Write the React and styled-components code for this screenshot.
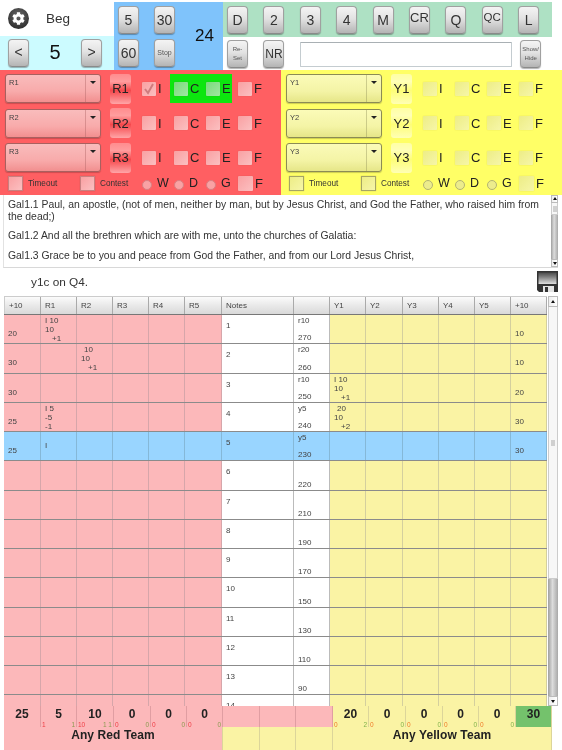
import React from "react";
import styled, { createGlobalStyle, css } from "styled-components";
import { FaCog } from "react-icons/fa";

const Global = createGlobalStyle`
  html, body { margin: 0; padding: 0; background: #fff; }
  body { font-family: "Liberation Sans", Arial, sans-serif; color: #222; }
`;

const Page = styled.div`
  width: 562px; height: 750px; overflow: hidden; background: #fff;
  display: flex; flex-direction: column; filter: blur(0.35px);
`;

/* ---------- top bar ---------- */
const TopBar = styled.div`display: flex; height: 70px; padding-top: 2px; box-sizing: border-box;`;
const LeftCol = styled.div`width: 114px; display: flex; flex-direction: column;`;
const LevelRow = styled.div`height: 34px; display: flex; align-items: center; padding: 0 0 2px 8px; box-sizing: border-box;`;
const Gear = styled.div`
  width: 21px; height: 21px; border-radius: 50%; color: #fff;
  background: radial-gradient(circle at 50% 35%, #666, #2a2a2a 85%);
  display: flex; align-items: center; justify-content: center;
`;
const Level = styled.span`font-size: 13.5px; margin-left: 17px; color: #333;`;
const QuarterRow = styled.div`
  flex: 1; background: #ccfbff; display: flex; align-items: center; padding-left: 8px; padding-bottom: 1px; box-sizing: border-box;
`;
const Quarter = styled.span`width: 52px; text-align: center; font-size: 20px; color: #111;`;

const Key = styled.div`
  flex: none; width: 21px; height: 28px; box-sizing: border-box; border-radius: 4px;
  border: 1px solid #a0a0a0; border-bottom-color: #8a8a8a; box-shadow: 0 1px 1px rgba(0,0,0,.3);
  background: linear-gradient(#f4f4f4, #e2e2e2 45%, #b4b4b4);
  display: flex; align-items: center; justify-content: center; text-align: center;
  color: ${p => (p.$small ? "#555" : "#333")};
  font-size: ${p => p.$size || 14}px; line-height: 1.5;
  ${p => p.$raised && css`padding-bottom: 5px;`}
`;
const ClockPanel = styled.div`
  width: 109px; background: #7fc3fb; display: grid; box-sizing: border-box;
  grid-template-columns: 21px 21px 1fr; column-gap: 15px; row-gap: 5px;
  padding: 4px 0 0 4px; grid-template-rows: 28px 28px;
`;
const Clock = styled.div`
  grid-column: 3; grid-row: 1 / 3; font-size: 17px; color: #111;
  display: flex; align-items: center; padding: 0 0 1px 5px;
`;
const RightCol = styled.div`width: 339px; display: flex; flex-direction: column;`;
const CallRow = styled.div`
  width: 329px; height: 35px; background: #aee1c4; display: flex; gap: 15.4px;
  padding: 4px 0 0 4px; box-sizing: border-box;
`;
const ActionRow = styled.div`display: flex; align-items: center; gap: 15.4px; padding: 1px 0 0 4px; height: 33px; box-sizing: border-box;`;
const NoteInput = styled.div`
  width: 212px; height: 25px; box-sizing: border-box; background: #fff;
  border: 1px solid #c4ccd0; border-top-color: #a9b0b4; border-radius: 1px; margin-right: -7px;
`;

/* ---------- team panels ---------- */
const Teams = styled.div`display: flex; height: 125px;`;
const palette = {
  red: {
    panel: "#ff5f62", sel: "linear-gradient(#f9bcbc, #f8abab 60%, #f28f8f)", selB: "#a9605f",
    btn: "linear-gradient(#ff8c8e, #ff9d9e 25%, #f5484c 55%, #ffa5a7)", text: "#222",
    box: "linear-gradient(135deg, #f9a0a2, #fbc0c1)", radio: "#f9a2a4", radioB: "#d98082",
  },
  yellow: {
    panel: "#ffff66", sel: "linear-gradient(#fbfbb8, #f4f4a6 60%, #e6e688)", selB: "#8b8b55",
    btn: "linear-gradient(#ffffa5, #ffffb8 25%, #fdfd78 55%, #ffffb5)", text: "#222",
    box: "linear-gradient(135deg, #eded86, #f6f6a8)", radio: "#ecec8c", radioB: "#b4b472",
  },
};
const Panel = styled.div`
  width: 281px; box-sizing: border-box; background: ${p => palette[p.$team].panel};
  padding: 4px 0 0 5px; display: flex; flex-direction: column; gap: 5px;
`;
const PlayerRow = styled.div`display: flex; align-items: center; height: 29.5px;`;
const Select = styled.div`
  width: 96px; height: 29px; box-sizing: border-box; flex: none; margin-right: 9px;
  background: ${p => palette[p.$team].sel}; border: 1px solid ${p => palette[p.$team].selB};
  border-radius: 3px; box-shadow: 0 1px 1px rgba(0,0,0,.2);
  display: flex;
`;
const SelectText = styled.span`flex: 1; font-size: 7.5px; padding: 3px 0 0 3px; color: #444;`;
const SelectCaret = styled.span`
  width: 15px; border-left: 1px solid ${p => palette[p.$team].selB}66; display: flex; justify-content: center; padding-top: 6px; box-sizing: border-box;
  &::after { content: ""; width: 0; height: 0; border: 3px solid transparent; border-top: 3.5px solid #222; }
`;
const PlayerBtn = styled.div`
  width: 21px; height: 30px; flex: none; margin-right: 7px; border-radius: 3px;
  background: ${p => palette[p.$team].btn};
  display: flex; align-items: center; justify-content: center;
  font-size: 13px; color: #222;
`;
const Hit = styled.div`display: flex; width: 62px; height: 29px; background: #0de60f; margin-right: 2px;`;
const CheckCell = styled.div`flex: none; width: 32px; height: 29px; display: flex; align-items: center; padding-left: 4px; box-sizing: border-box;`;
const Box = styled.span`
  flex: none; width: ${p => p.$s || 14}px; height: ${p => p.$s || 14}px; box-sizing: border-box; border-radius: 1px;
  background: ${p => (p.$hit ? "linear-gradient(135deg, #7bd97d, #9fe8a0)" : palette[p.$team].box)};
  box-shadow: 0 0 1px rgba(90,60,40,.35);
  display: flex; align-items: center; justify-content: center;
`;
const Letter = styled.span`font-size: 13px; margin-left: 2px; color: #222;`;
const OptionRow = styled.div`display: flex; align-items: center; height: 16px; margin-top: -2px; padding-left: 3px;`;
const Option = styled.div`flex: none; width: ${p => p.$w}px; display: flex; align-items: center;`;
const OptBox = styled(Box)`
  border: 1px solid ${p => (p.$team === "red" ? "#c98080" : "#a5a565")}; border-radius: 0; margin-right: 5px;
`;
const OptLabel = styled.span`font-size: 8.2px; color: #333;`;
const RadioCell = styled.div`flex: none; width: 32px; display: flex; align-items: center; box-sizing: border-box;`;
const Radio = styled.span`
  width: 10px; height: 10px; border-radius: 50%; box-sizing: border-box; margin: 3px 5px 0 0;
  background: ${p => palette[p.$team].radio};
  border: 1px solid ${p => palette[p.$team].radioB};
`;
const RadioLabel = styled.span`font-size: 12.5px; color: #222; margin-top: -1px;`;
const FinalCell = styled.div`display: flex; align-items: center;`;

function TeamPanel({ team, prefix, checked, hit }) {
  return (
    <Panel $team={team}>
      {[1, 2, 3].map(n => (
        <PlayerRow key={n}>
          <Select $team={team}>
            <SelectText>{prefix}{n}</SelectText>
            <SelectCaret $team={team} />
          </Select>
          <PlayerBtn $team={team}>{prefix}{n}</PlayerBtn>
          <CheckCell>
            <Box $team={team}>
              {checked && n === 1 && (
                <svg width="12" height="12" viewBox="0 0 12 12"><path d="M2 6l3 4 5-9" fill="none" stroke="#cf7c7e" strokeWidth="2" /></svg>
              )}
            </Box>
            <Letter>I</Letter>
          </CheckCell>
          {hit && n === 1 ? (
            <Hit>
              <CheckCell><Box $team={team} $hit /><Letter>C</Letter></CheckCell>
              <CheckCell><Box $team={team} $hit /><Letter>E</Letter></CheckCell>
            </Hit>
          ) : (
            <>
              <CheckCell><Box $team={team} /><Letter>C</Letter></CheckCell>
              <CheckCell><Box $team={team} /><Letter>E</Letter></CheckCell>
            </>
          )}
          <CheckCell><Box $team={team} /><Letter>F</Letter></CheckCell>
        </PlayerRow>
      ))}
      <OptionRow>
        <Option $w={72}><OptBox as="span" $team={team} $s={15} /><OptLabel>Timeout</OptLabel></Option>
        <Option $w={62}><OptBox as="span" $team={team} $s={15} /><OptLabel>Contest</OptLabel></Option>
        {["W", "D", "G"].map(l => (
          <RadioCell key={l}><Radio $team={team} /><RadioLabel>{l}</RadioLabel></RadioCell>
        ))}
        <FinalCell><Box $team={team} $s={15} /><Letter>F</Letter></FinalCell>
      </OptionRow>
    </Panel>
  );
}

/* ---------- scripture ---------- */
const Reading = styled.div`
  display: flex; height: 73px; margin-left: 3px; width: 555px; box-sizing: border-box;
  border-left: 1px solid #e2e2e2; border-bottom: 1px solid #d8d8d8;
`;
const ReadingText = styled.div`
  flex: 1; padding: 4px 12px 0 4px; font-size: 10.4px; line-height: 11.8px; color: #333;
  overflow: hidden;
`;
const Verse = styled.p`margin: 0 0 7.8px;`;
const FullLine = styled.span`display: block; text-align: justify; text-align-last: justify;`;
const Bar = styled.div`flex: none; width: ${p => p.$w}px; display: flex; flex-direction: column; background: #fff;`;
const Arrow = styled.div`
  flex: none; height: ${p => p.$h}px; background: linear-gradient(90deg, #eee, #fff); border: 1px solid #bbb; box-sizing: border-box;
  display: flex; align-items: center; justify-content: center;
  &::after {
    content: ""; border: 2.5px solid transparent;
    ${p => (p.$up ? "border-bottom: 3px solid #111; margin-top: -3px;" : "border-top: 3px solid #111; margin-top: 3px;")}
  }
`;
const Thumb = styled.div`
  flex: none; height: ${p => p.$h}px; background: #f7f7f7; border: 1px solid #ccc; border-top: 0; box-sizing: border-box;
  display: flex; align-items: center; justify-content: center;
  &::after { content: ""; width: 4px; height: 6px; background: #d0d0d0; }
`;
const Track = styled.div`flex: 1; background: linear-gradient(90deg, #9f9f9f, #dcdcdc 45%, #a8a8a8);`;

/* ---------- note line ---------- */
const LogLine = styled.div`height: 28px; display: flex; align-items: center; padding: 0 4px 2px 31px; box-sizing: border-box;`;
const LogText = styled.span`flex: 1; font-size: 11.8px; color: #333; padding-top: 2px;`;

/* ---------- sheet ---------- */
const Sheet = styled.div`display: flex; height: 410px; padding-left: 4px; gap: 1px; width: 558px; box-sizing: border-box;`;
const Columns = "37px 36px 36px 36px 36px 37px 72px 36px 36px 37px 36px 36px 36px 36px";
const SheetBody = styled.div`width: 543px; display: flex; flex-direction: column; overflow: hidden;`;
const HeaderRow = styled.div`
  flex: none; display: grid; grid-template-columns: ${Columns}; height: 19px; box-sizing: border-box;
  border-top: 1px solid #ccc; border-bottom: 1px solid #777;
`;
const Head = styled.div`
  background: linear-gradient(#fbfbfb, #e9e9e9 50%, #d9d9d9);
  border-right: 1px solid #aaa; font-size: 8px; color: #444; padding-left: 4px;
  display: flex; align-items: center;
  &:first-child { border-left: 1px solid #ccc; }
`;
const Row = styled.div`
  flex: none; display: grid; grid-template-columns: ${Columns}; height: 29.25px; box-sizing: border-box;
  border-bottom: 1.5px solid #8b8b8b;
`;
const tones = { red: "#fcb8ba", yellow: "#faf3a4", white: "#fff", blue: "#99d5ff" };
const Cell = styled.div`
  background: ${p => (p.$active ? tones.blue : tones[p.$tone])};
  border-right: 1px solid ${p => (p.$tone === "white" && !p.$active ? "#bbb" : p.$tone === "yellow" && !p.$active ? "#d4cf9e" : p.$tone === "red" && !p.$active ? "#d6a6aa" : "#85b8d8")};
  font-size: 8px; line-height: 9px; color: #444; padding-left: 4px; box-sizing: border-box; overflow: hidden;
`;
const Bonus = styled(Cell)`padding-top: 14px;`;
const Marks = styled(Cell)`padding-top: 1px;`;
const Mark = styled.div`padding-left: ${p => p.$indent || 0}px;`;
const Lone = styled(Cell)`padding-top: 9px;`;
const NoteCell = styled(Cell)`padding-top: 6px;`;
const Running = styled(Cell)`
  display: flex; flex-direction: column; justify-content: space-between; padding-top: 1px; padding-bottom: 1px; padding-left: 4px;
`;

const rowsData = [
  { l: 20, n: 1, c: "r10", t: 270, r: 10, r1: [["I 10", 0], ["10", 0], ["+1", 7]] },
  { l: 30, n: 2, c: "r20", t: 260, r: 10, r2: [["10", 3], ["10", 0], ["+1", 7]] },
  { l: 30, n: 3, c: "r10", t: 250, r: 20, y1: [["I 10", 0], ["10", 0], ["+1", 7]] },
  { l: 25, n: 4, c: "y5", t: 240, r: 30, r1: [["I 5", 0], ["-5", 0], ["-1", 0]], y1: [["20", 3], ["10", 0], ["+2", 7]] },
  { l: 25, n: 5, c: "y5", t: 230, r: 30, r1lone: "I", active: true },
  { n: 6, t: 220 }, { n: 7, t: 210 }, { n: 8, t: 190 }, { n: 9, t: 170 }, { n: 10, t: 150 },
  { n: 11, t: 130 }, { n: 12, t: 110 }, { n: 13, t: 90 }, { n: 14 },
];

const MarkCell = ({ tone, active, lines, lone }) => {
  if (lone) return <Lone $tone={tone} $active={active}>{lone}</Lone>;
  return (
    <Marks $tone={tone} $active={active}>
      {(lines || []).map(([txt, ind], i) => <Mark key={i} $indent={ind}>{txt}</Mark>)}
    </Marks>
  );
};

const SheetRow = ({ d }) => {
  const a = d.active;
  return (
    <Row>
      <Bonus $tone="red" $active={a}>{d.l}</Bonus>
      <MarkCell tone="red" active={a} lines={d.r1} lone={d.r1lone} />
      <MarkCell tone="red" active={a} lines={d.r2} />
      <MarkCell tone="red" active={a} />
      <MarkCell tone="red" active={a} />
      <MarkCell tone="red" active={a} />
      <NoteCell $tone="white" $active={a}>{d.n}</NoteCell>
      <Running $tone="white" $active={a}><span>{d.c || "\u00a0"}</span><span>{d.t}</span></Running>
      <MarkCell tone="yellow" active={a} lines={d.y1} />
      <MarkCell tone="yellow" active={a} />
      <MarkCell tone="yellow" active={a} />
      <MarkCell tone="yellow" active={a} />
      <MarkCell tone="yellow" active={a} />
      <Bonus $tone="yellow" $active={a}>{d.r}</Bonus>
    </Row>
  );
};

/* ---------- totals ---------- */
const TotalsRow = styled.div`
  margin-left: 4px; width: 548px; height: 21px; display: grid;
  grid-template-columns: 37px 36px 37px 37px 36px 36px 37px 36px 37px 36px 37px 37px 36px 37px 36px;
`;
const Total = styled.div`
  background: ${p => (p.$win ? "#74c26c" : tones[p.$tone])};
  border-right: 1px solid ${p => (p.$tone === "yellow" ? "#dcd59a" : "#e09ea2")};
  border-bottom: 1px solid ${p => (p.$tone === "yellow" ? "#dcd59a" : "#e09ea2")};
  display: flex; flex-direction: column; box-sizing: border-box; padding: 0 1px;
`;
const Big = styled.div`font-size: 12px; line-height: 14px; font-weight: bold; text-align: center; color: #222; height: 14px; padding-top: 1px;`;
const Small = styled.div`display: flex; justify-content: space-between; font-size: 6.5px; line-height: 7px;`;
const Minus = styled.span`color: ${p => (p.$tone === "red" ? "#ee3c44" : "#ee7a2a")};`;
const Plus = styled.span`color: ${p => (p.$tone === "red" ? "#8a9a50" : "#7fb24a")};`;
const AnyRow = styled.div`
  margin-left: 4px; width: 548px; height: 23px; display: grid;
  grid-template-columns: 219px 37px 36px 37px 219px;
`;
const Any = styled.div`
  background: ${p => tones[p.$tone]}; font-size: 12px; font-weight: bold; color: #222; text-align: center; line-height: 17px;
  border-right: 1px solid #dcd59a; box-sizing: border-box; letter-spacing: .1px;
`;

const totals = [
  { v: 25, tone: "red" },
  { v: 5, tone: "red", a: "1", b: "1" },
  { v: 10, tone: "red", a: "10", b: "1 1" },
  { v: 0, tone: "red", a: "0", b: "0" },
  { v: 0, tone: "red", a: "0", b: "0" },
  { v: 0, tone: "red", a: "0", b: "0" },
  { tone: "red" }, { tone: "red" }, { tone: "red" },
  { v: 20, tone: "yellow", a: "0", b: "2" },
  { v: 0, tone: "yellow", a: "0", b: "0" },
  { v: 0, tone: "yellow", a: "0", b: "0" },
  { v: 0, tone: "yellow", a: "0", b: "0" },
  { v: 0, tone: "yellow", a: "0", b: "0" },
  { v: 30, tone: "yellow", win: true },
];

const SaveIcon = () => (
  <svg width="21" height="21" viewBox="0 0 21 21">
    <defs>
      <linearGradient id="sv" x1="0" y1="0" x2="0" y2="1">
        <stop offset="0" stopColor="#4a4a4a" /><stop offset="0.35" stopColor="#7a7a7a" /><stop offset="1" stopColor="#dedede" />
      </linearGradient>
    </defs>
    <path d="M0 0h21v21H2l-2-2z" fill="#333" />
    <rect x="1.5" y="1.5" width="18" height="11.5" fill="url(#sv)" />
    <rect x="6" y="15" width="11" height="6" fill="#e4e4e4" />
    <rect x="8" y="16" width="3" height="5" fill="#333" />
  </svg>
);

const topKeys = ["D", "2", "3", "4", "M", "CR", "Q", "QC", "L"];

export default function App() {
  return (
    <Page>
      <Global />
      <TopBar>
        <LeftCol>
          <LevelRow>
            <Gear><FaCog size={13} /></Gear>
            <Level>Beg</Level>
          </LevelRow>
          <QuarterRow>
            <Key>&lt;</Key>
            <Quarter>5</Quarter>
            <Key>&gt;</Key>
          </QuarterRow>
        </LeftCol>
        <ClockPanel>
          <Key>5</Key>
          <Key>30</Key>
          <Clock>24</Clock>
          <Key>60</Key>
          <Key $small $size={7}>Stop</Key>
        </ClockPanel>
        <RightCol>
          <CallRow>
            {topKeys.map(k => (
              <Key key={k} $size={k === "QC" ? 11.5 : k === "CR" ? 13 : 14} $raised={k === "CR" || k === "QC"}>{k}</Key>
            ))}
          </CallRow>
          <ActionRow>
            <Key $small $size={6}>Re-<br />Set</Key>
            <Key $size={12}>NR</Key>
            <NoteInput />
            <Key $small $size={6}>Show/<br />Hide</Key>
          </ActionRow>
        </RightCol>
      </TopBar>

      <Teams>
        <TeamPanel team="red" prefix="R" checked hit />
        <TeamPanel team="yellow" prefix="Y" />
      </Teams>

      <Reading>
        <ReadingText>
          <Verse>
            <FullLine>Gal1.1 Paul, an apostle, (not of men, neither by man, but by Jesus Christ, and God the Father, who raised him from</FullLine>
            the dead;)
          </Verse>
          <Verse>Gal1.2 And all the brethren which are with me, unto the churches of Galatia:</Verse>
          <Verse>Gal1.3 Grace be to you and peace from God the Father, and from our Lord Jesus Christ,</Verse>
        </ReadingText>
        <Bar $w={7}>
          <Arrow $up $h={8} />
          <Thumb $h={12} />
          <Track />
          <Arrow $h={8} />
        </Bar>
      </Reading>

      <LogLine>
        <LogText>y1c on Q4.</LogText>
        <SaveIcon />
      </LogLine>

      <Sheet>
        <SheetBody>
          <HeaderRow>
            {["+10", "R1", "R2", "R3", "R4", "R5", "Notes", "", "Y1", "Y2", "Y3", "Y4", "Y5", "+10"].map((h, i) => (
              <Head key={i}>{h}</Head>
            ))}
          </HeaderRow>
          {rowsData.map(d => <SheetRow key={d.n} d={d} />)}
        </SheetBody>
        <Bar $w={10}>
          <Arrow $up $h={11} />
          <Thumb $h={272} />
          <Track />
          <Arrow $h={10} />
        </Bar>
      </Sheet>

      <TotalsRow>
        {totals.map((t, i) => (
          <Total key={i} $tone={t.tone} $win={t.win}>
            <Big>{t.v ?? ""}</Big>
            {t.a && <Small><Minus $tone={t.tone}>{t.a}</Minus><Plus $tone={t.tone}>{t.b}</Plus></Small>}
          </Total>
        ))}
      </TotalsRow>
      <AnyRow>
        <Any $tone="red">Any Red Team</Any>
        <Any $tone="yellow" />
        <Any $tone="yellow" />
        <Any $tone="yellow" />
        <Any $tone="yellow">Any Yellow Team</Any>
      </AnyRow>
    </Page>
  );
}
